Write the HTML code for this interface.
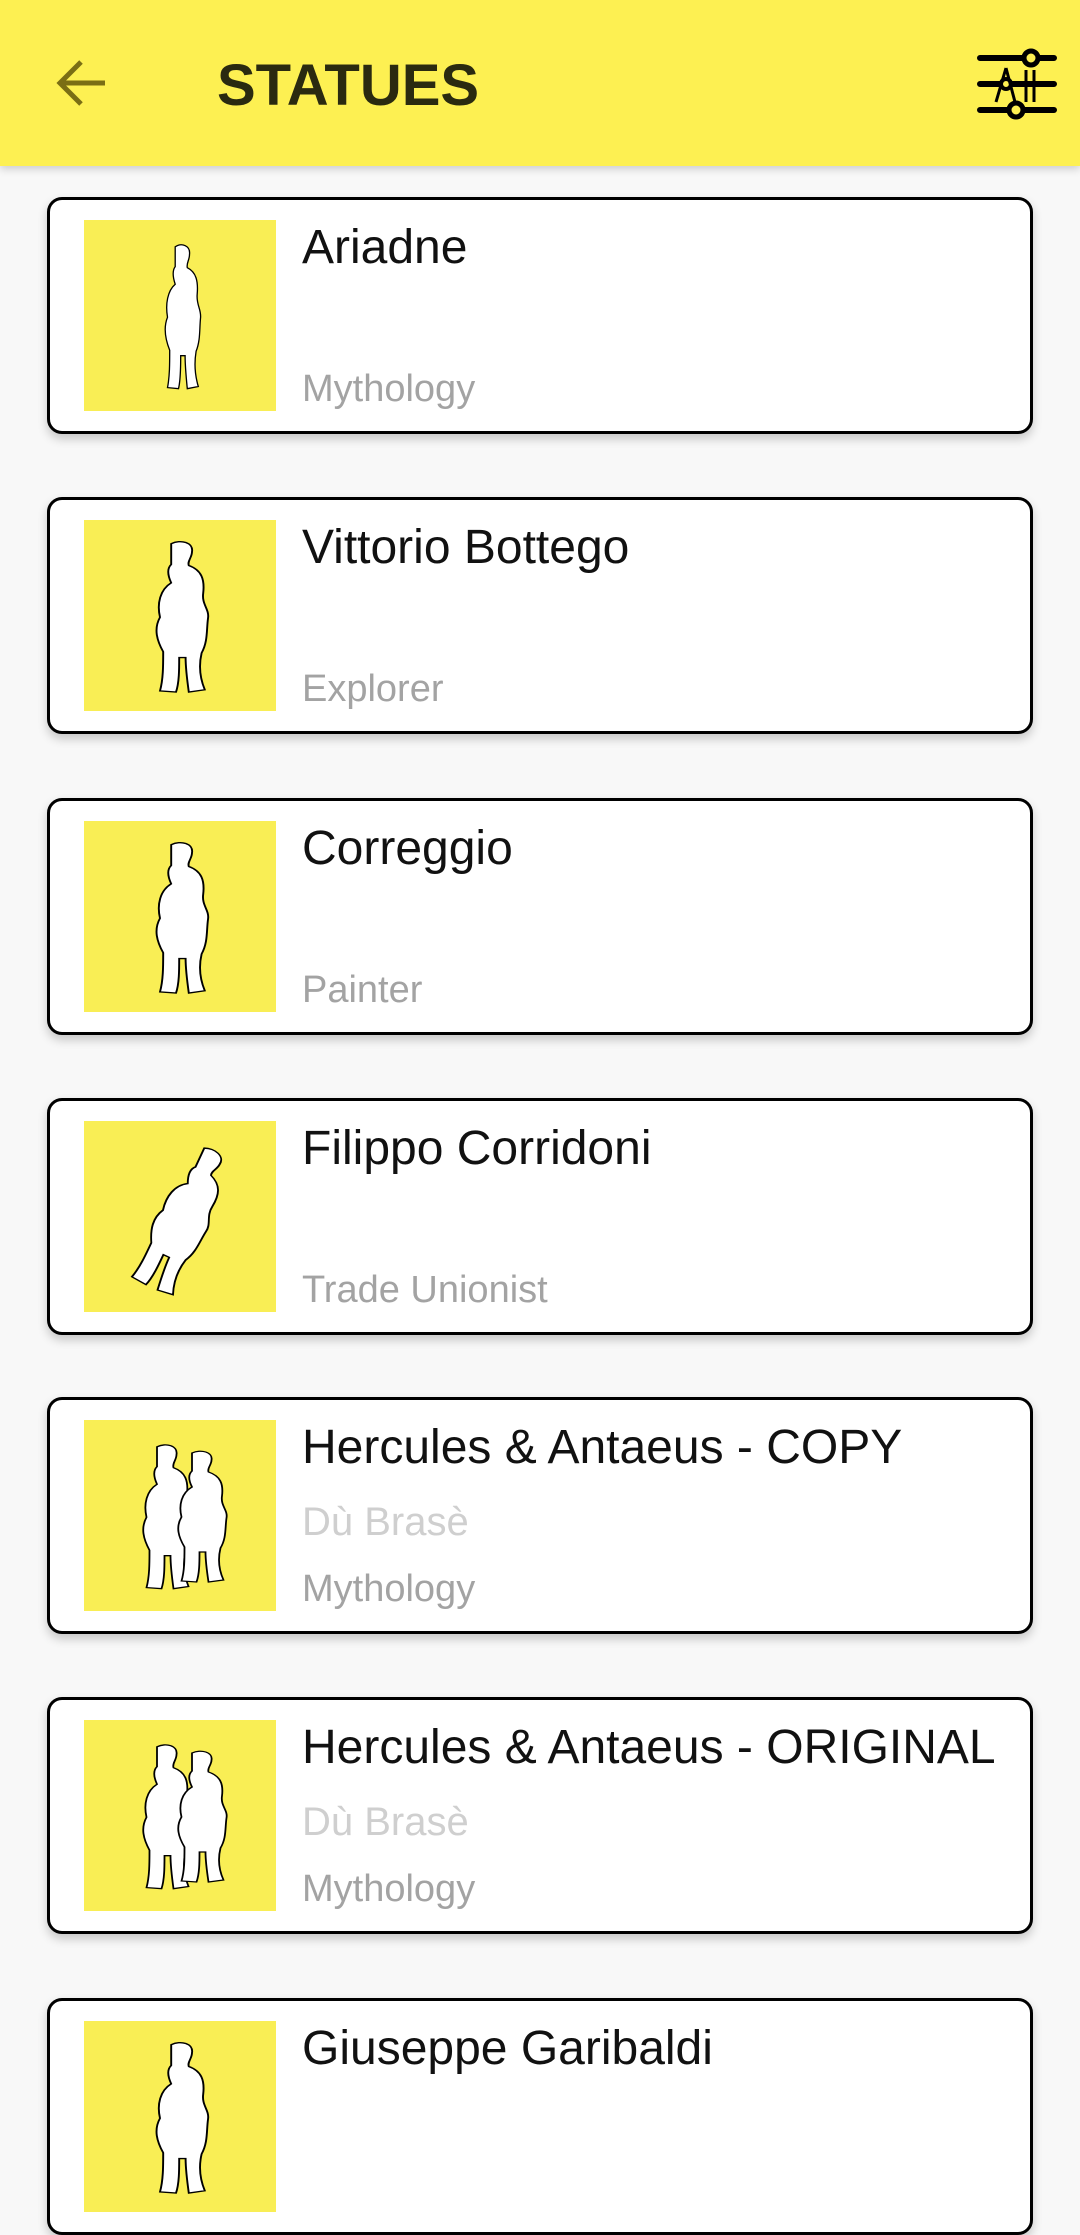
<!DOCTYPE html>
<html><head><meta charset="utf-8"><style>
*{margin:0;padding:0;box-sizing:border-box}
body{width:1080px;height:2160px;overflow:hidden;background:#f8f8f8;font-family:"Liberation Sans",sans-serif;position:relative}
.hdr{position:absolute;left:0;top:0;width:1080px;height:166px;background:#fdf052;box-shadow:0 3px 8px rgba(0,0,0,.18);z-index:2}
.title{position:absolute;left:217px;top:52px;font-size:58px;font-weight:bold;color:#2a2a10}
.card{position:absolute;left:47px;width:986px;height:237px;background:#fff;border:3px solid #000;border-radius:15px;box-shadow:0 5px 10px rgba(0,0,0,.2)}
.img{position:absolute;left:34px;top:20px;width:192px;height:191px;background:#f9ee55}
.t{position:absolute;left:252px;top:20px;font-size:48px;color:#111}
.s{position:absolute;left:252px;top:168px;font-size:38px;color:#a3a3a3}
.b{position:absolute;left:252px;top:100px;font-size:40px;color:#cfcfcf}
</style></head><body>
<div class="hdr">
<svg style="position:absolute;left:55px;top:58px" width="54" height="50" viewBox="0 0 54 50"><path d="M50 25H6M26 4L5 25l21 21" fill="none" stroke="#7a6e14" stroke-width="5"/></svg>
<div class="title">STATUES</div>
<svg style="position:absolute;left:976px;top:46px" width="82" height="74" viewBox="0 0 82 74"><g stroke="#000" stroke-width="6" stroke-linecap="round" fill="none"><path d="M4 12H78M4 38H78M4 64H78"/></g><circle cx="55" cy="12" r="7" fill="#fdf052" stroke="#000" stroke-width="5"/><circle cx="40" cy="64" r="7" fill="#fdf052" stroke="#000" stroke-width="5"/><circle cx="30" cy="38" r="5" fill="#fdf052" stroke="#000" stroke-width="4"/><path d="M30 22L20 56M30 22l9 34M50 24V56M58 24V56" stroke="#000" stroke-width="3" fill="none"/></svg>
</div>

<svg width="0" height="0" style="position:absolute"><defs><path id="fig" d="M92 38c6-4 14-1 13 7c0 5-3 8-2 12c8 4 10 12 9 24c-1 10 4 14 3 22c-1 10 0 20-4 30c-2 12-1 22 2 32l-10 2c-1-10-2-20-2-30l-4 0c0 10 0 22-2 30l-10-1c2-10 2-22 2-34c-4-10-6-20-2-30c-2-12 0-24 7-30c-2-6-3-12 0-16z" fill="#fff" stroke="#000" stroke-width="1.2"/></defs></svg>

<div class="card" style="top:197px"><div class="img"><svg width="192" height="191"><use href="#fig" transform="translate(-10 -15) scale(1.1 1.1)"/></svg></div><div class="t">Ariadne</div><div class="s">Mythology</div></div>
<div class="card" style="top:497px"><div class="img"><svg width="192" height="191"><use href="#fig" transform="translate(-60 -20) scale(1.6 1.15)"/></svg></div><div class="t">Vittorio Bottego</div><div class="s">Explorer</div></div>
<div class="card" style="top:798px"><div class="img"><svg width="192" height="191"><use href="#fig" transform="translate(-60 -20) scale(1.6 1.15)"/></svg></div><div class="t">Correggio</div><div class="s">Painter</div></div>
<div class="card" style="top:1098px"><div class="img"><svg width="192" height="191"><use href="#fig" transform="rotate(25 96 100) translate(-60 -20) scale(1.6 1.15)"/></svg></div><div class="t">Filippo Corridoni</div><div class="s">Trade Unionist</div></div>
<div class="card" style="top:1397px"><div class="img"><svg width="192" height="191"><use href="#fig" transform="translate(-65 -15) scale(1.5 1.1)"/><use href="#fig" transform="translate(-30 -5) scale(1.5 1)"/></svg></div><div class="t">Hercules &amp; Antaeus - COPY</div><div class="b">Dù Brasè</div><div class="s">Mythology</div></div>
<div class="card" style="top:1697px"><div class="img"><svg width="192" height="191"><use href="#fig" transform="translate(-65 -15) scale(1.5 1.1)"/><use href="#fig" transform="translate(-30 -5) scale(1.5 1)"/></svg></div><div class="t">Hercules &amp; Antaeus - ORIGINAL</div><div class="b">Dù Brasè</div><div class="s">Mythology</div></div>
<div class="card" style="top:1998px"><div class="img"><svg width="192" height="191"><use href="#fig" transform="translate(-60 -20) scale(1.6 1.15)"/></svg></div><div class="t">Giuseppe Garibaldi</div></div>
</body></html>
